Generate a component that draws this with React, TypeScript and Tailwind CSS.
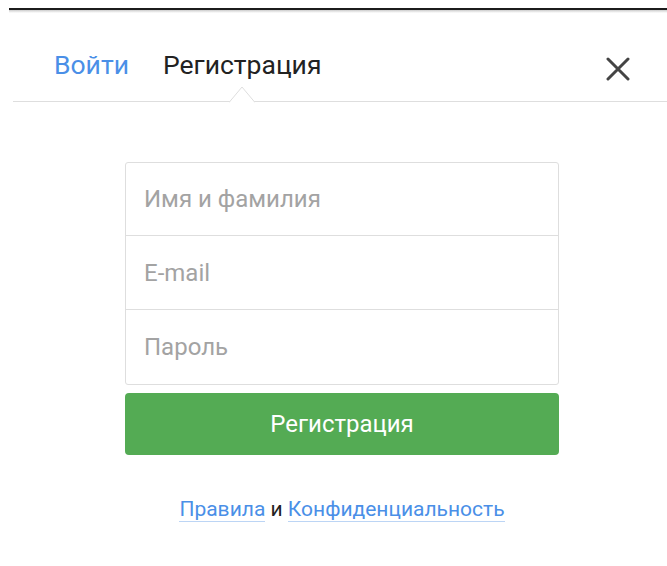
import React, { useState } from "react";

// Registration dialog: tabs, three stacked fields, green submit, legal links
export default function App() {
  const [tab] = useState("register");
  const fields = ["Имя и фамилия", "E-mail", "Пароль"];

  return (
    <div className="min-h-[566px] bg-white pt-2 pl-[9px] font-['Roboto','Noto_Sans',sans-serif]">
      <div className="relative min-h-[558px] border-t-2 border-[#1c1c1c] before:absolute before:inset-x-0 before:top-0 before:h-[3px] before:bg-linear-to-b before:from-black/20 before:to-transparent">
        <div className="relative ml-1 flex h-[92px] items-start border-b border-[#dedede] pl-[41px] pr-[37px] pt-[39px]">
          <a className="cursor-pointer text-[26.5px] leading-8 text-[#4a8fe7]">Войти</a>
          <div className="relative ml-[34px] text-[26.5px] leading-8 text-[#222]">
            Регистрация
            {tab === "register" && (
              <svg
                className="absolute left-1/2 top-[37px] -translate-x-1/2"
                width="26"
                height="17"
                viewBox="0 0 26 17"
              >
                <polygon points="0,16.5 13,1 26,16.5" fill="#fff" />
                <polyline points="0,16.5 13,1 26,16.5" fill="none" stroke="#dedede" strokeWidth="1" />
              </svg>
            )}
          </div>
          <button className="ml-auto mt-[8px] text-[#444]">
            <svg width="24" height="24" viewBox="0 0 24 24">
              <path d="M2 2 L22 22 M22 2 L2 22" stroke="currentColor" strokeWidth="3" strokeLinecap="round" />
            </svg>
          </button>
        </div>

        <form className="ml-[116px] mt-[60px] w-[434px]">
          <div className="flex flex-col divide-y divide-[#dedede] rounded-[3px] border border-[#dedede]">
            {fields.map((f) => (
              <input
                key={f}
                placeholder={f}
                className="h-[74px] bg-transparent pl-[18px] text-[24px] text-[#333] outline-none first:h-[73px] placeholder:text-[#a3a3a3]"
              />
            ))}
          </div>
          <button
            type="button"
            className="mt-2 h-[62px] w-full rounded-[4px] bg-[#54ab54] text-[24px] text-white"
          >
            Регистрация
          </button>
          <p className="mt-[42px] text-center text-[21px] leading-6 text-[#222]">
            <a className="cursor-pointer border-b border-[#bcd5f5] text-[#4a8fe7]">Правила</a>
            {" и "}
            <a className="cursor-pointer border-b border-[#bcd5f5] text-[#4a8fe7]">Конфиденциальность</a>
          </p>
        </form>
      </div>
    </div>
  );
}
